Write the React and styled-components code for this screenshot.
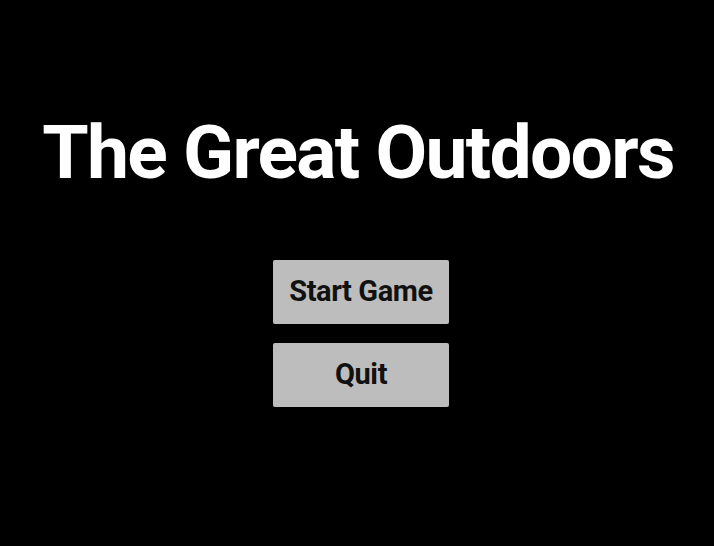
import React from 'react'
import styled, { createGlobalStyle } from 'styled-components'

const GlobalStyle = createGlobalStyle`
  html, body {
    margin: 0;
    padding: 0;
    background: #000;
  }
  body {
    font-family: Roboto, "Liberation Sans", sans-serif;
  }
`

const Screen = styled.div`
  width: 714px;
  height: 546px;
  background: #000;
  display: flex;
  flex-direction: column;
  align-items: center;
  padding-top: 115px;
  box-sizing: border-box;
`

const Title = styled.h1`
  margin: 0 0 0 2px;
  color: #fff;
  font-size: 75px;
  font-weight: 700;
  line-height: 1;
  letter-spacing: -1.7px;
`

const Menu = styled.div`
  display: flex;
  flex-direction: column;
  gap: 19px;
  margin: 70px 0 0 8px;
`

const MenuButton = styled.button`
  width: 176px;
  height: 64px;
  border: none;
  border-radius: 2px;
  background: #bdbdbd;
  color: #111;
  font-family: Roboto, "Liberation Sans", sans-serif;
  font-size: 29px;
  font-weight: 700;
  letter-spacing: -0.4px;
  padding: 0 0 2px;
  cursor: pointer;
`

export default function App() {
  return (
    <>
      <GlobalStyle />
      <Screen>
        <Title>The Great Outdoors</Title>
        <Menu>
          <MenuButton>Start Game</MenuButton>
          <MenuButton>Quit</MenuButton>
        </Menu>
      </Screen>
    </>
  )
}
